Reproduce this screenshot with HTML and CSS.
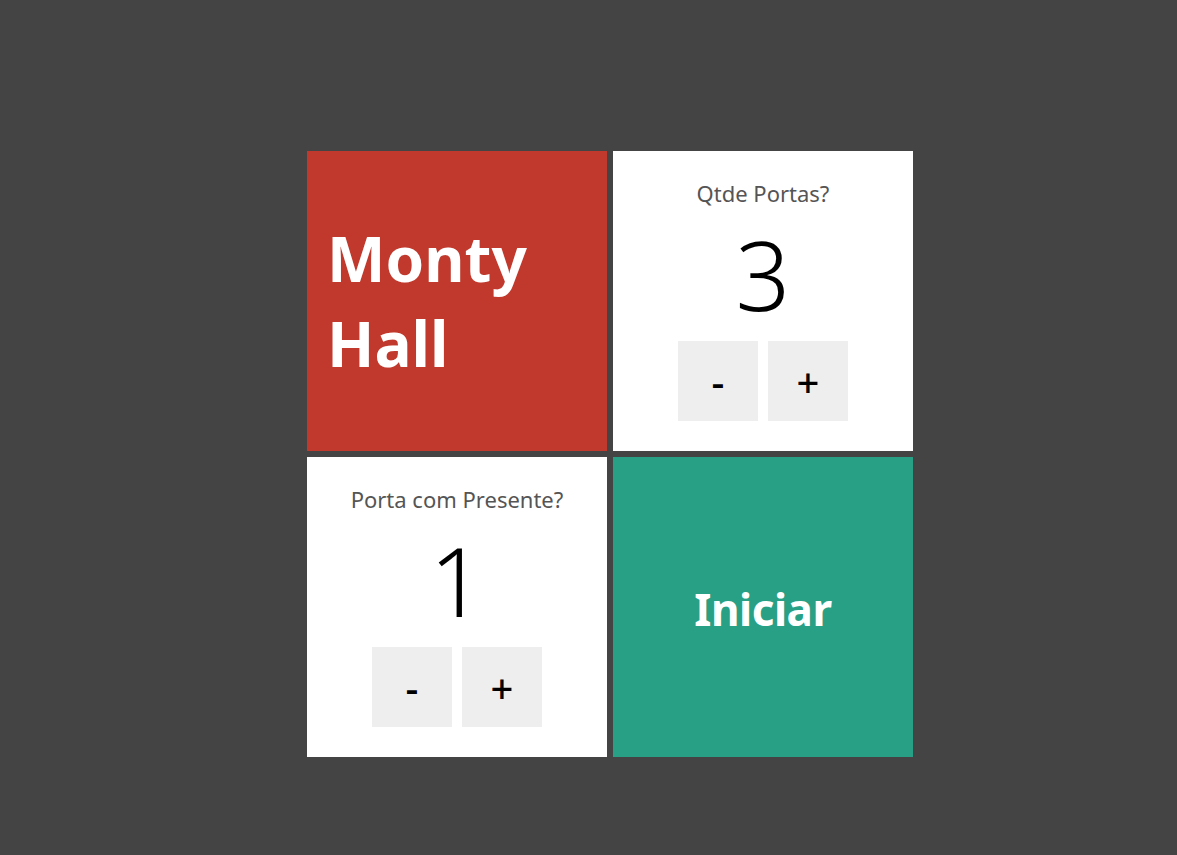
FILE: index.html
```html
<!DOCTYPE html>
<html lang="pt-BR">
<head>
<meta charset="utf-8">
<title>Monty Hall</title>
<link rel="stylesheet" href="styles.css">
</head>
<body>
<main class="page">
  <div class="grid">
    <div class="card card-red">
      <h1 class="title">Monty Hall</h1>
    </div>
    <div class="card card-white">
      <div class="entrada">
        <span class="texto">Qtde Portas?</span>
        <span class="valor">3</span>
        <div class="botoes">
          <button class="btn">-</button>
          <button class="btn">+</button>
        </div>
      </div>
    </div>
    <div class="card card-white">
      <div class="entrada">
        <span class="texto">Porta com Presente?</span>
        <span class="valor">1</span>
        <div class="botoes">
          <button class="btn">-</button>
          <button class="btn">+</button>
        </div>
      </div>
    </div>
    <div class="card card-green">
      <span class="iniciar">Iniciar</span>
    </div>
  </div>
</main>
</body>
</html>
```
FILE: styles.css
```css
html, body {
  margin: 0;
  padding: 0;
  height: 100%;
}
body {
  background: #444444;
  font-family: "Noto Sans", "Open Sans", sans-serif;
}
.page {
  padding: 151px 0 0 307px;
}
.grid {
  display: grid;
  grid-template-columns: 300px 300px;
  grid-template-rows: 300px 300px;
  gap: 6px;
}
.card {
  display: flex;
  width: 300px;
  height: 300px;
}
.card-red {
  background: #c0392c;
  align-items: center;
}
.card-white {
  background: #ffffff;
}
.card-green {
  background: #28a085;
  align-items: center;
  justify-content: center;
}
.title {
  margin: 0 0 0 20px;
  color: #fff;
  font-size: 62px;
  font-weight: 700;
  line-height: 85px;
}
.iniciar {
  color: #fff;
  font-size: 44px;
  font-weight: 700;
  letter-spacing: -0.5px;
  margin-top: 4px;
}
.entrada {
  flex: 1;
  display: flex;
  flex-direction: column;
  align-items: center;
  padding: 26px 0 30px;
}
.texto {
  color: #555;
  font-size: 22px;
  line-height: 32px;
}
.valor {
  flex: 1;
  display: flex;
  align-items: center;
  font-size: 96px;
  font-weight: 350;
  color: #000;
  line-height: 1;
  margin-top: -2px;
}
.botoes {
  display: flex;
  gap: 10px;
}
.btn {
  width: 80px;
  height: 80px;
  border: none;
  background: #eeeeee;
  font-family: "Noto Sans", "Open Sans", sans-serif;
  font-size: 40px;
  font-weight: 500;
  color: #000;
  padding: 0;
}
```
